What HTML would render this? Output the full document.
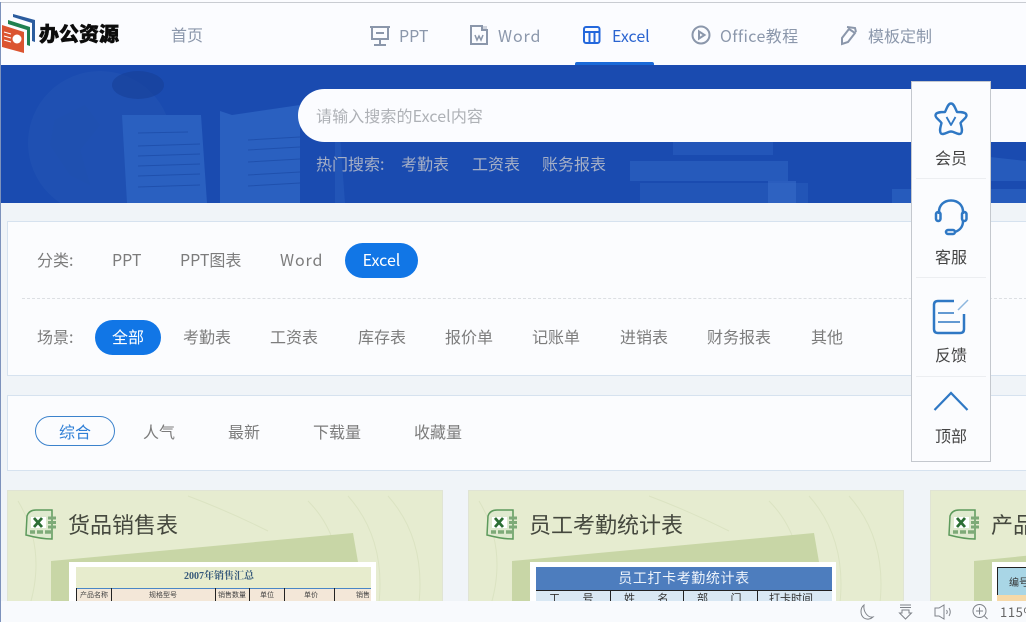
<!DOCTYPE html>
<html lang="zh"><head><meta charset="utf-8"><title>办公资源</title>
<style>
html,body{margin:0;padding:0}
body{width:1026px;height:622px;overflow:hidden;position:relative;background:#f0f4f8;font-family:"Noto Sans CJK SC","Liberation Sans",sans-serif;font-size:16px;color:#7c7c7c}
.a{position:absolute;white-space:nowrap;line-height:22px}
.b{position:absolute}
svg{position:absolute;overflow:visible}
.nav{color:#8b97ab}
.cap{color:#444;width:78px;text-align:center;left:912px}
.pill{position:absolute;background:#1176e6;color:#fff;border-radius:18px;text-align:center;height:35px;line-height:33px}
.card{position:absolute;top:490px;height:120px;background:#e6ecd0;border:1px solid #e0e4d4;box-sizing:border-box;overflow:hidden}
.ct{position:absolute;top:18px;font-size:22px;line-height:30px;color:#45483e;white-space:nowrap}
.th{position:absolute;white-space:nowrap;font-size:7px;line-height:12px;color:#444}
.vl{position:absolute;width:1px;background:#222}
</style></head><body>

<!-- header -->
<div class="b" style="left:0;top:0;width:1026px;height:65px;background:#fbfcff"></div>
<div class="b" style="left:0;top:2px;width:1026px;height:1px;background:#c9ccd2"></div>

<svg style="left:0;top:12px" width="40" height="42" viewBox="0 0 40 42">
<path d="M13 2L35 8V30L32 29V11L13 5Z" fill="#2b5c9e"/>
<path d="M8 8L30 15V34L27 33V18L8 12Z" fill="#1f8050"/>
<path d="M2 13L24 20V41L2 35Z" fill="#db5430"/>
<circle cx="17" cy="27" r="4.5" fill="#fff"/>
<path d="M4 20L11 22M4 24L11 26M4 28L11 30" stroke="#fff" stroke-width="1"/>
</svg>
<div class="a" style="left:39px;top:18px;font-size:20px;line-height:30px;font-weight:900;color:#0c0c0c;-webkit-text-stroke:.5px #0c0c0c">办公资源</div>
<div class="a nav" style="left:171px;top:23px">首页</div>

<svg style="left:369px;top:25px" width="22" height="22" viewBox="0 0 22 22" fill="none" stroke="#8b97ab" stroke-width="2">
<path d="M1 2H21M3 2V14H19V2M11 14V19M5 20H17M7 8H15"/></svg>
<div class="a nav" style="left:399px;top:24px">PPT</div>

<svg style="left:470px;top:25px" width="18" height="20" viewBox="0 0 18 20" fill="none" stroke="#8b97ab" stroke-width="2">
<path d="M1 1H12V5H17V19H1Z"/><path d="M5 10L7 15L9 11L11 15L13 10" stroke-width="1.5"/><rect x="12" y="1" width="5" height="4" fill="#8b97ab" stroke="none" opacity=".4"/></svg>
<div class="a nav" style="left:498px;top:24px;letter-spacing:.9px">Word</div>

<svg style="left:583px;top:26px" width="18" height="18" viewBox="0 0 18 18" fill="none" stroke="#2468dc" stroke-width="2">
<rect x="1" y="1" width="15.5" height="16" rx="2"/><path d="M1 6H16.5M6.5 6V17M11.5 6V17"/></svg>
<div class="a" style="left:612px;top:24px;color:#2a64d0">Excel</div>
<div class="b" style="left:575px;top:62px;width:79px;height:3px;background:#1a6ad8;border-radius:2px 2px 0 0"></div>

<svg style="left:691px;top:25px" width="20" height="20" viewBox="0 0 20 20" fill="none" stroke="#8b97ab" stroke-width="2">
<circle cx="10" cy="10" r="8.5"/><path d="M8 6.5L13.5 10L8 13.5Z"/></svg>
<div class="a nav" style="left:720px;top:24px;letter-spacing:.4px">Office教程</div>

<svg style="left:840px;top:25px" width="18" height="20" viewBox="0 0 18 20" fill="none" stroke="#8b97ab" stroke-width="2">
<path d="M2 19L2 13L9 4L15 8L8 17Z"/><path d="M7 2L15 3L16 7"/></svg>
<div class="a nav" style="left:868px;top:24px">模板定制</div>

<!-- banner -->
<div class="b" style="left:0;top:65px;width:1026px;height:138px;background:#1a4bb0;overflow:hidden">
<svg style="left:0;top:0" width="1026" height="138" viewBox="0 0 1026 138">
<circle cx="100" cy="78" r="72" fill="#2a5cb8" opacity=".35"/>
<ellipse cx="138" cy="20" rx="26" ry="14" fill="#173f98" opacity=".6"/>
<path d="M55 55L85 40L100 60L80 85L90 120L70 110L50 80Z" fill="#1f50ae" opacity=".5"/>
<path d="M122 50H201L207 138H127Z" fill="#2a60c0"/>
<path d="M220 46L232 50V138H220Z" fill="#2a60c0"/>
<path d="M232 50L300 40V138H232Z" fill="#2a60c0"/>
<g stroke="#1b4aa6" stroke-width="1" opacity=".7"><path d="M138 68L188 67M138 81L200 79M138 91L200 89M138 101L200 99M138 111L200 109M138 122L200 120M248 75L300 72M248 85L300 82M248 97L300 94M248 110L300 107M248 121L300 118"/></g>
<path d="M335 75L340 70L345 138H335Z" fill="#2c62c2" opacity=".45"/>
<rect x="673" y="77" width="100" height="13" fill="#2c62c2" opacity=".5"/>
<rect x="630" y="96" width="158" height="20" fill="#2c62c2" opacity=".65"/>
<rect x="640" y="118" width="168" height="20" fill="#2c62c2" opacity=".45"/>
<rect x="768" y="116" width="28" height="22" fill="#3a70cc" opacity=".5"/>
<path d="M990 92L1026 96V116H990Z" fill="#2c62c2" opacity=".7"/>
<rect x="892" y="124" width="134" height="14" fill="#2c62c2" opacity=".7"/>
</svg>
</div>
<div class="b" style="left:298px;top:89px;width:760px;height:53px;background:#fbfcff;border-radius:27px 0 0 27px"></div>
<div class="a" style="left:316px;top:104px;color:#aeb1b6;letter-spacing:.1px">请输入搜索的Excel内容</div>
<div class="a" style="left:316px;top:152px;color:#a5afc6">热门搜索:</div>
<div class="a" style="left:401px;top:152px;color:#a5afc6">考勤表</div>
<div class="a" style="left:472px;top:152px;color:#a5afc6">工资表</div>
<div class="a" style="left:542px;top:152px;color:#a5afc6">账务报表</div>

<!-- filter panel -->
<div class="b" style="left:7px;top:221px;width:1030px;height:155px;box-sizing:border-box;background:#fbfcfe;border:1px solid #d6e2ef"></div>
<div class="b" style="left:22px;top:298px;width:1010px;border-top:1px dashed #dcdfe3"></div>
<div class="a" style="left:37px;top:248px">分类:</div>
<div class="a" style="left:112px;top:248px">PPT</div>
<div class="a" style="left:180px;top:248px">PPT图表</div>
<div class="a" style="left:280px;top:248px;letter-spacing:.9px">Word</div>
<div class="pill" style="left:345px;top:243px;width:73px">Excel</div>
<div class="a" style="left:37px;top:325px">场景:</div>
<div class="pill" style="left:95px;top:320px;width:66px">全部</div>
<div class="a" style="left:183px;top:325px">考勤表</div>
<div class="a" style="left:270px;top:325px">工资表</div>
<div class="a" style="left:358px;top:325px">库存表</div>
<div class="a" style="left:445px;top:325px">报价单</div>
<div class="a" style="left:532px;top:325px">记账单</div>
<div class="a" style="left:620px;top:325px">进销表</div>
<div class="a" style="left:707px;top:325px">财务报表</div>
<div class="a" style="left:811px;top:325px">其他</div>

<!-- sort panel -->
<div class="b" style="left:7px;top:395px;width:1030px;height:76px;box-sizing:border-box;background:#fbfcfe;border:1px solid #d6e2ef"></div>
<div class="b" style="left:35px;top:416px;width:80px;height:30px;box-sizing:border-box;border:1px solid #3b82cc;border-radius:15px;text-align:center;line-height:29px;color:#2f7fd6">综合</div>
<div class="a" style="left:143px;top:420px">人气</div>
<div class="a" style="left:228px;top:420px">最新</div>
<div class="a" style="left:313px;top:420px">下载量</div>
<div class="a" style="left:414px;top:420px">收藏量</div>

<!-- cards -->
<div class="card" style="left:7px;width:436px">
<svg style="left:0;top:0" width="436" height="120" fill="none" stroke="#dbe3c2" stroke-width="1"><path d="M300 10Q340 50 330 120M340 5Q380 50 370 120M380 5Q420 50 410 120M10 10Q40 60 20 120M180 5Q220 20 260 40"/></svg>
<svg style="left:43px;top:39px" width="310" height="90"><path d="M0 31L302 3L307 32V90H0Z" fill="#c8d6a6"/></svg>
<svg style="left:17px;top:18px" width="33" height="33" viewBox="0 0 33 33"><path d="M2 7Q4 1 11 1H27V30Q16 30 1 26Z" fill="#dfeacf" stroke="#5d9a5c" stroke-width="1.500"/><rect x="6" y="8" width="15" height="11" fill="#fff"/><path d="M9 9L17 18M17 9L9 18" stroke="#2c6e34" stroke-width="2.800"/><path d="M23 9H31M23 13.500H31M23 18H31" stroke="#7eaa78" stroke-width="3"/><path d="M5 23H10M12 23H18M20 23H27" stroke="#7eaa78" stroke-width="3.500"/></svg>
<div class="ct" style="left:60px">货品销售表</div>
<div class="b" style="left:61px;top:71px;width:307px;height:40px;background:#fff"></div>
<div class="b" style="left:68px;top:76px;width:295px;height:35px;background:#e7eccd"></div>
<div class="a" style="left:176px;top:79px;font:bold 10px/14px 'Liberation Serif','Noto Serif CJK SC',serif;color:#35587a">2007年销售汇总</div>
<div class="b" style="left:68px;top:97px;width:295px;height:15px;background:#f3e7d8;border-top:1px solid #4a86c6;box-sizing:border-box"></div>
<div class="vl" style="left:68px;top:97px;height:15px"></div><div class="vl" style="left:103px;top:97px;height:15px"></div><div class="vl" style="left:207px;top:97px;height:15px"></div><div class="vl" style="left:241px;top:97px;height:15px"></div><div class="vl" style="left:276px;top:97px;height:15px"></div><div class="vl" style="left:326px;top:97px;height:15px"></div>
<div class="th" style="left:72px;top:98px">产品名称</div>
<div class="th" style="left:141px;top:98px">规格型号</div>
<div class="th" style="left:210px;top:98px">销售数量</div>
<div class="th" style="left:252px;top:98px">单位</div>
<div class="th" style="left:296px;top:98px">单价</div>
<div class="th" style="left:348px;top:98px">销售</div>
</div>

<div class="card" style="left:468px;width:436px">
<svg style="left:0;top:0" width="436" height="120" fill="none" stroke="#dbe3c2" stroke-width="1"><path d="M300 10Q340 50 330 120M340 5Q380 50 370 120M380 5Q420 50 410 120M10 10Q40 60 20 120M180 5Q220 20 260 40"/></svg>
<svg style="left:43px;top:39px" width="310" height="90"><path d="M0 31L302 3L307 32V90H0Z" fill="#c8d6a6"/></svg>
<svg style="left:17px;top:18px" width="33" height="33" viewBox="0 0 33 33"><path d="M2 7Q4 1 11 1H27V30Q16 30 1 26Z" fill="#dfeacf" stroke="#5d9a5c" stroke-width="1.500"/><rect x="6" y="8" width="15" height="11" fill="#fff"/><path d="M9 9L17 18M17 9L9 18" stroke="#2c6e34" stroke-width="2.800"/><path d="M23 9H31M23 13.500H31M23 18H31" stroke="#7eaa78" stroke-width="3"/><path d="M5 23H10M12 23H18M20 23H27" stroke="#7eaa78" stroke-width="3.500"/></svg>
<div class="ct" style="left:60px">员工考勤统计表</div>
<div class="b" style="left:61px;top:71px;width:306px;height:41px;background:#fff"></div>
<div class="b" style="left:67px;top:76px;width:296px;height:36px;background:#d9e8f4"></div>
<div class="b" style="left:67px;top:76px;width:296px;height:24px;background:#4d7dbe;border-bottom:1px solid #222;box-sizing:border-box;text-align:center;color:#eef4fb;font-size:14px;line-height:23px;letter-spacing:.6px">员工打卡考勤统计表</div>
<div class="a" style="left:80px;top:100px;font-size:11px;line-height:14px;color:#333;word-spacing:20px">工 号</div>
<div class="a" style="left:155px;top:100px;font-size:11px;line-height:14px;color:#333;word-spacing:20px">姓 名</div>
<div class="a" style="left:228px;top:100px;font-size:11px;line-height:14px;color:#333;word-spacing:20px">部 门</div>
<div class="a" style="left:300px;top:100px;font-size:11px;line-height:14px;color:#333">打卡时间</div>
<div class="vl" style="left:141px;top:100px;height:12px"></div>
<div class="vl" style="left:214px;top:100px;height:12px"></div>
<div class="vl" style="left:288px;top:100px;height:12px"></div>
</div>

<div class="card" style="left:930px;width:140px">
<svg style="left:43px;top:39px" width="100" height="90"><path d="M0 31L100 21V90H0Z" fill="#c8d6a6"/></svg>
<svg style="left:17px;top:18px" width="33" height="33" viewBox="0 0 33 33"><path d="M2 7Q4 1 11 1H27V30Q16 30 1 26Z" fill="#dfeacf" stroke="#5d9a5c" stroke-width="1.500"/><rect x="6" y="8" width="15" height="11" fill="#fff"/><path d="M9 9L17 18M17 9L9 18" stroke="#2c6e34" stroke-width="2.800"/><path d="M23 9H31M23 13.500H31M23 18H31" stroke="#7eaa78" stroke-width="3"/><path d="M5 23H10M12 23H18M20 23H27" stroke="#7eaa78" stroke-width="3.500"/></svg>
<div class="ct" style="left:60px">产品</div>
<div class="b" style="left:61px;top:71px;width:90px;height:41px;background:#fff"></div>
<div class="b" style="left:66px;top:76px;width:40px;height:36px;background:#a9d6e6;border:1px solid #222;box-sizing:border-box"></div>
<div class="b" style="left:66px;top:104px;width:40px;height:8px;background:#f6d9a8"></div>
<div class="a" style="left:78px;top:84px;font-size:10px;line-height:14px;color:#333">编号</div>
</div>

<!-- side toolbar -->
<div class="b" style="left:911px;top:81px;width:80px;height:381px;box-sizing:border-box;background:#fbfcfe;border:1px solid #c4c8ce"></div>
<div class="b" style="left:916px;top:178px;width:70px;height:1px;background:#eceef1"></div>
<div class="b" style="left:916px;top:277px;width:70px;height:1px;background:#eceef1"></div>
<div class="b" style="left:916px;top:376px;width:70px;height:1px;background:#eceef1"></div>

<svg style="left:934px;top:102px" width="34" height="34" viewBox="0 0 34 34" fill="none" stroke="#2f78c4" stroke-width="2.400" stroke-linejoin="round">
<path d="M17 1.500C20 1.500 21 6 23 10C27 10 32.500 10 32.500 13.500C32.500 16 28.500 18 26.500 21C27.500 25 29 29 27 31.500C24.500 33.500 20.500 29.500 17 29.500C13.500 29.500 9.500 33.500 7 31.500C5 29 6.500 25 7.500 21C5.500 18 1.500 16 1.500 13.500C1.500 10 7 10 11 10C13 6 14 1.500 17 1.500Z"/>
<path d="M12.500 15L17 23L21.500 15" stroke-width="1.800"/></svg>
<div class="a cap" style="top:146px">会员</div>

<svg style="left:934px;top:199px" width="34" height="38" viewBox="0 0 34 38" fill="none" stroke="#2f78c4" stroke-width="2.500">
<path d="M5 15V13C5 6 10 1.500 17 1.500C24 1.500 29 6 29 13V15"/>
<rect x="2" y="13" width="4.500" height="9" rx="2.200"/><rect x="28" y="13" width="4.500" height="9" rx="2.200"/>
<path d="M29 22C29 28 26 31 21 33"/><rect x="12" y="31" width="9" height="4" rx="2"/></svg>
<div class="a cap" style="top:245px">客服</div>

<svg style="left:933px;top:299px" width="36" height="36" viewBox="0 0 36 36" fill="none" stroke="#2f78c4" stroke-width="2.500">
<path d="M21 2H5Q1 2 1 6V30Q1 34 5 34H27Q31 34 31 30V15"/>
<path d="M5 14H21M5 23H27" stroke-width="1.500"/>
<path d="M25 11L35 1" stroke="#8db6de" stroke-width="1.500"/></svg>
<div class="a cap" style="top:343px">反馈</div>

<svg style="left:933px;top:391px" width="36" height="22" viewBox="0 0 36 22" fill="none" stroke="#2f78c4" stroke-width="2.200">
<path d="M1.500 19L18 2L34.500 19"/></svg>
<div class="a cap" style="top:424px">顶部</div>

<!-- status bar -->
<div class="b" style="left:0;top:601px;width:1026px;height:21px;background:#f8fafd"></div>
<svg style="left:858px;top:604px" width="20" height="16" viewBox="0 0 20 16" fill="none" stroke="#7e8289" stroke-width="1">
<path d="M6 1C2 4 2 11 6 14C9 16 13 15 15 13C10 14 5 8 6 1Z"/></svg>
<svg style="left:898px;top:604px" width="16" height="16" viewBox="0 0 16 16" fill="none" stroke="#7e8289" stroke-width="1">
<path d="M2 1H13M2 3.500H13M4 6H11V9H13.500L7.500 15L1.500 9H4Z"/></svg>
<svg style="left:934px;top:604px" width="20" height="16" viewBox="0 0 20 16" fill="none" stroke="#7e8289" stroke-width="1">
<path d="M1 4H5L10 1V15L5 12H1Z"/><path d="M12.500 6Q14 8 12.500 10M15 4Q17.500 8 15 12"/></svg>
<svg style="left:972px;top:604px" width="17" height="16" viewBox="0 0 17 16" fill="none" stroke="#7e8289" stroke-width="1">
<circle cx="7.500" cy="7" r="6.500"/><path d="M4 7H11M7.500 3.500V10.500M12.500 12L15.500 15"/></svg>
<div class="a" style="left:1000px;top:601px;font-size:13px;line-height:21px;color:#666;letter-spacing:.6px">115%</div>

<!-- window left edge -->
<div class="b" style="left:0;top:2px;width:1px;height:620px;background:#7d92bc"></div>
</body></html>
